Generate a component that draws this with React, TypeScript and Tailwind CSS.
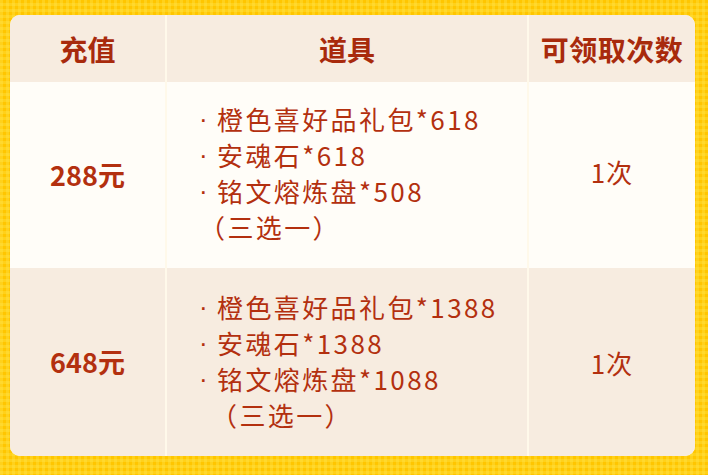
const rows = [
  {
    price: "288元",
    items: ["橙色喜好品礼包*618", "安魂石*618", "铭文熔炼盘*508"],
    note: "（三选一）",
    noteIndent: "pl-0",
    bg: "bg-[#fffdf8]",
    h: "h-[186px]",
    countPad: "pb-[8px]",
    listPad: "pb-[4px]",
  },
  {
    price: "648元",
    items: ["橙色喜好品礼包*1388", "安魂石*1388", "铭文熔炼盘*1088"],
    note: "（三选一）",
    noteIndent: "pl-[12px]",
    bg: "bg-[#f7ece0]",
    h: "h-[188px]",
    countPad: "pb-0",
    listPad: "pb-[2px]",
  },
];

export default function App() {
  return (
    <div
      className="h-[475px] w-[708px] bg-[#ffc600] pl-[10px] pt-[15px] bg-[linear-gradient(90deg,rgba(255,230,80,0.35)_50%,transparent_50%),linear-gradient(0deg,rgba(255,230,80,0.35)_50%,transparent_50%)] bg-[length:6px_6px]"
      style={{ fontFamily: '"Noto Sans CJK SC", "Noto Sans", sans-serif' }}
    >
      <div className="grid w-[685px] grid-cols-[155px_360px_166px] gap-x-[2px] overflow-hidden rounded-[10px] bg-[#fff9ea] text-[#b3300f]">
        <div className="flex h-[67px] items-center justify-center bg-[#f7ece0] text-[28px] font-bold text-[#a82a0c]">
          充值
        </div>
        <div className="flex h-[67px] items-center justify-center bg-[#f7ece0] text-[28px] font-bold text-[#a82a0c]">
          道具
        </div>
        <div className="flex h-[67px] items-center justify-center bg-[#f7ece0] text-[28px] font-bold tracking-[0.5px] text-[#a82a0c]">
          可领取次数
        </div>

        {rows.map((r) => (
          <div key={r.price} className="contents">
            <div className={`flex items-center justify-center ${r.h} ${r.bg} text-[27px] font-bold`}>
              {r.price}
            </div>
            <div
              className={`flex flex-col justify-center ${r.h} ${r.bg} ${r.listPad} pl-[32px] text-[26px] leading-[36px] tracking-[2.4px]`}
            >
              {r.items.map((t) => (
                <div key={t} className="flex">
                  <span className="w-[18px] shrink-0 font-['Liberation_Sans'] tracking-normal">·</span>
                  <span>{t}</span>
                </div>
              ))}
              <div className={r.noteIndent}>{r.note}</div>
            </div>
            <div
              className={`flex items-center justify-center ${r.h} ${r.bg} ${r.countPad} text-[26px] tracking-[1px]`}
            >
              1次
            </div>
          </div>
        ))}
      </div>
    </div>
  );
}
